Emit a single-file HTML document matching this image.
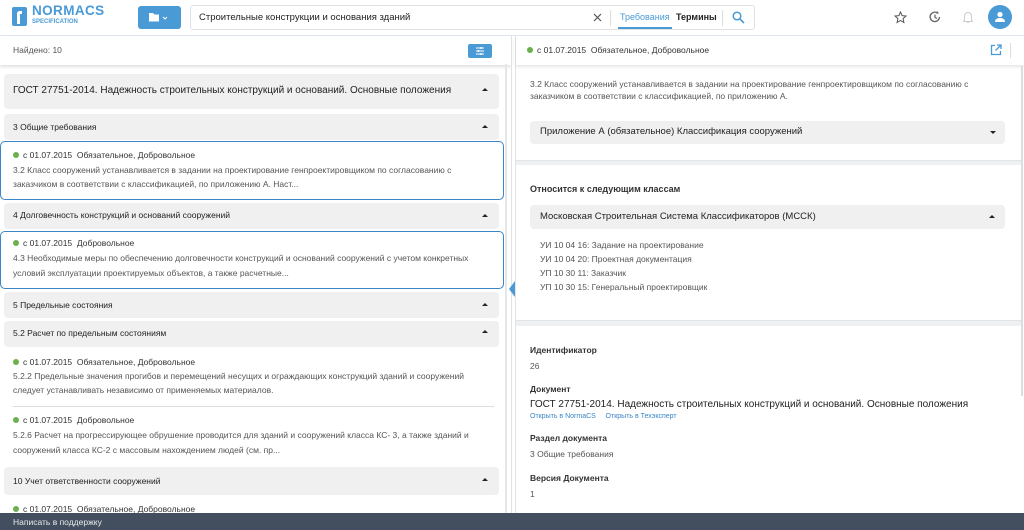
<!DOCTYPE html>
<html><head><meta charset="utf-8"><style>
*{margin:0;padding:0;box-sizing:border-box}
body{width:1024px;height:530px;overflow:hidden;background:#fff;font-family:"Liberation Sans","Noto Sans CJK SC",sans-serif;color:#333;position:relative;font-size:8.5px}
.a{position:absolute;white-space:nowrap}
.g{position:absolute;background:#f0f0f0;border-radius:4px}
.bc{position:absolute;border:1.3px solid #3a86c8;border-radius:5px;background:#fff}
.dot{display:inline-block;width:6px;height:6px;border-radius:50%;background:#6ab04c;margin-right:4px;vertical-align:0}
.t{color:#555}
.b{font-weight:bold;color:#333}
.car{position:absolute;width:0;height:0;border-left:3px solid transparent;border-right:3px solid transparent;border-bottom:3px solid #222}
.cd{border-bottom:0;border-top:3px solid #222}
</style></head><body>
<!-- header -->
<div class="a" style="left:0;top:0;width:1024px;height:36px;border-bottom:1px solid #dfe6ee"></div>
<svg class="a" style="left:12px;top:7px" width="15" height="19"><path d="M2 0h11a2 2 0 0 1 2 2v15a2 2 0 0 1-2 2H2a2 2 0 0 1-2-2V2a2 2 0 0 1 2-2z" fill="#4a9ad6"/><path d="M5 17V7c0-2 1-3 3-3h2v3H8v10z" fill="#fff"/></svg>
<div class="a" style="left:32px;top:3px;font-size:13.5px;font-weight:bold;color:#4a9ad6;letter-spacing:.4px">NORMACS</div>
<div class="a" style="left:32px;top:19px;font-size:6px;font-weight:bold;color:#4a9ad6">SPECIFICATION</div>
<div class="a" style="left:138px;top:6px;width:43px;height:23px;background:#4a9ad6;border-radius:3px"></div>
<svg class="a" style="left:149px;top:12px" width="24" height="11"><path d="M0 1h4l1.5 1.5H10v7H0z" fill="#fff"/><path d="M14 5l2 2 2-2" stroke="#fff" fill="none" stroke-width="1"/></svg>
<div class="a" style="left:190px;top:5px;width:565px;height:25px;border:1px solid #dfe3e8;border-radius:3px"></div>
<div class="a" style="left:199px;top:12px;font-size:9.5px;color:#222">Строительные конструкции и основания зданий</div>
<svg class="a" style="left:593px;top:13px" width="9" height="9"><path d="M1 1l7 7M8 1l-7 7" stroke="#555" stroke-width="1.2"/></svg>
<div class="a" style="left:610px;top:10px;width:1px;height:16px;background:#ddd"></div>
<div class="a" style="left:620px;top:12px;font-size:9px;color:#4a9ad6">Требования</div>
<div class="a" style="left:618px;top:27px;width:54px;height:2px;background:#4a9ad6"></div>
<div class="a" style="left:676px;top:12px;font-size:9px;color:#222;font-weight:bold">Термины</div>
<div class="a" style="left:722px;top:10px;width:1px;height:16px;background:#ddd"></div>
<svg class="a" style="left:732px;top:11px" width="13" height="13"><circle cx="5" cy="5" r="3.8" stroke="#4a9ad6" stroke-width="1.5" fill="none"/><path d="M8 8l4 4" stroke="#4a9ad6" stroke-width="1.6"/></svg>
<svg class="a" style="left:894px;top:11px" width="13" height="13"><path d="M6.5 1l1.6 3.6 3.9.4-2.9 2.6.8 3.9-3.4-2-3.4 2 .8-3.9L1 5l3.9-.4z" stroke="#555" fill="none" stroke-width="1"/></svg>
<svg class="a" style="left:928px;top:10px" width="14" height="14"><path d="M11.5 7A4.7 4.7 0 1 1 9.5 3" stroke="#666" fill="none" stroke-width="1.3"/><path d="M7 4.5V7.5l2 1" stroke="#666" fill="none" stroke-width="1.2"/><path d="M9 1l2 2.3-2.6.6z" fill="#666"/></svg>
<svg class="a" style="left:962px;top:11px" width="12" height="13"><path d="M6 1.5c-2.3 0-3.5 1.7-3.5 4V9L1.5 10.5h9L9.5 9V5.5C9.5 3.2 8.3 1.5 6 1.5z" stroke="#ccc" fill="none"/><path d="M5 11.5h2" stroke="#ccc"/></svg>
<div class="a" style="left:988px;top:5px;width:24px;height:24px;border-radius:50%;background:#4a9ad6"></div>
<svg class="a" style="left:994px;top:11px" width="12" height="12"><circle cx="6" cy="3.5" r="2.6" fill="#fff"/><path d="M1 11c0-3 2.5-4 5-4s5 1 5 4z" fill="#fff"/></svg>

<!-- left toolbar -->
<div class="a" style="left:0;top:36px;width:511px;height:29px;background:#fff;box-shadow:0 2px 3px rgba(0,0,0,.12)"></div>
<div class="a" style="left:13px;top:45px;color:#555">Найдено: 10</div>
<div class="a" style="left:468px;top:44px;width:24px;height:14px;background:#4a9ad6;border-radius:2px"></div>
<svg class="a" style="left:475px;top:46px" width="10" height="10"><path d="M1 2h8M1 5h8M1 8h8" stroke="#fff" stroke-width="1"/><path d="M6 1v2M3.5 4v2M6 7v2" stroke="#fff" stroke-width="1.3"/></svg>
<div class="a" style="left:505px;top:64px;width:2px;height:449px;background:#e6e6e6"></div>
<div class="a" style="left:511px;top:36px;width:1px;height:477px;background:#e3e3e3"></div>

<div class="g" style="left:4px;top:74px;width:495px;height:35px"></div>
<div class="a" style="left:13px;top:85px;font-size:10px;color:#222">ГОСТ 27751-2014. Надежность строительных конструкций и оснований. Основные положения</div>
<div class="car" style="left:482px;top:88px"></div>

<div class="g" style="left:4px;top:114px;width:495px;height:26px"></div>
<div class="a" style="left:13px;top:122px;color:#222">3 Общие требования</div>
<div class="car" style="left:482px;top:125px"></div>

<div class="bc" style="left:0;top:141px;width:504px;height:59px"></div>
<div class="a" style="left:13px;top:150px;color:#333"><span class="dot"></span>с 01.07.2015&nbsp; Обязательное, Добровольное</div>
<div class="a t" style="left:13px;top:165px">3.2 Класс сооружений устанавливается в задании на проектирование генпроектировщиком по согласованию с</div>
<div class="a t" style="left:13px;top:179px">заказчиком в соответствии с классификацией, по приложению А. Наст...</div>

<div class="g" style="left:4px;top:203px;width:495px;height:26px"></div>
<div class="a" style="left:13px;top:210px;color:#222">4 Долговечность конструкций и оснований сооружений</div>
<div class="car" style="left:482px;top:214px"></div>

<div class="bc" style="left:0;top:231px;width:504px;height:58px"></div>
<div class="a" style="left:13px;top:238px;color:#333"><span class="dot"></span>с 01.07.2015&nbsp; Добровольное</div>
<div class="a t" style="left:13px;top:253px">4.3 Необходимые меры по обеспечению долговечности конструкций и оснований сооружений с учетом конкретных</div>
<div class="a t" style="left:13px;top:268px">условий эксплуатации проектируемых объектов, а также расчетные...</div>

<div class="g" style="left:4px;top:292px;width:495px;height:26px"></div>
<div class="a" style="left:13px;top:300px;color:#222">5 Предельные состояния</div>
<div class="car" style="left:482px;top:303px"></div>

<div class="g" style="left:4px;top:321px;width:495px;height:26px"></div>
<div class="a" style="left:13px;top:328px;color:#222">5.2 Расчет по предельным состояниям</div>
<div class="car" style="left:482px;top:330px"></div>

<div class="a" style="left:13px;top:357px;color:#333"><span class="dot"></span>с 01.07.2015&nbsp; Обязательное, Добровольное</div>
<div class="a t" style="left:13px;top:371px">5.2.2 Предельные значения прогибов и перемещений несущих и ограждающих конструкций зданий и сооружений</div>
<div class="a t" style="left:13px;top:385px">следует устанавливать независимо от применяемых материалов.</div>
<div class="a" style="left:13px;top:406px;width:481px;height:1px;background:#ddd"></div>
<div class="a" style="left:13px;top:415px;color:#333"><span class="dot"></span>с 01.07.2015&nbsp; Добровольное</div>
<div class="a t" style="left:13px;top:430px">5.2.6 Расчет на прогрессирующее обрушение проводится для зданий и сооружений класса КС- 3, а также зданий и</div>
<div class="a t" style="left:13px;top:445px">сооружений класса КС-2 с массовым нахождением людей (см. пр...</div>

<div class="g" style="left:4px;top:467px;width:495px;height:28px"></div>
<div class="a" style="left:13px;top:476px;color:#222">10 Учет ответственности сооружений</div>
<div class="car" style="left:482px;top:478px"></div>
<div class="a" style="left:13px;top:504px;color:#333"><span class="dot"></span>с 01.07.2015&nbsp; Обязательное, Добровольное</div>

<svg class="a" style="left:509px;top:281px" width="6" height="16"><path d="M6 0L0 8l6 8z" fill="#4a9ad6"/></svg>

<!-- right panel -->
<div class="a" style="left:515px;top:36px;width:1px;height:477px;background:#e3e3e3"></div>
<div class="a" style="left:516px;top:36px;width:508px;height:29px;box-shadow:0 2px 3px rgba(0,0,0,.1)"></div>
<div class="a" style="left:527px;top:45px;color:#333"><span class="dot"></span>с 01.07.2015&nbsp; Обязательное, Добровольное</div>
<svg class="a" style="left:990px;top:44px" width="12" height="12"><path d="M5 1.5H1.5v9h9V7" stroke="#4a9ad6" fill="none" stroke-width="1.3"/><path d="M7 1h4v4M11 1L5.5 6.5" stroke="#4a9ad6" fill="none" stroke-width="1.3"/></svg>
<div class="a" style="left:1010px;top:43px;width:1px;height:15px;background:#ddd"></div>
<div class="a" style="left:1021px;top:66px;width:2px;height:330px;background:#ddd"></div>

<div class="a t" style="left:530px;top:79px">3.2 Класс сооружений устанавливается в задании на проектирование генпроектировщиком по согласованию с</div>
<div class="a t" style="left:530px;top:91px">заказчиком в соответствии с классификацией, по приложению А.</div>
<div class="g" style="left:530px;top:121px;width:475px;height:23px"></div>
<div class="a" style="left:540px;top:126px;font-size:9.5px;color:#222">Приложение А (обязательное) Классификация сооружений</div>
<div class="car cd" style="left:990px;top:131px"></div>

<div class="a" style="left:516px;top:160px;width:505px;height:5px;background:#eef0f2;border-top:1px solid #e2e5e8"></div>
<div class="a b" style="left:530px;top:184px;font-size:9px">Относится к следующим классам</div>
<div class="g" style="left:530px;top:205px;width:475px;height:24px"></div>
<div class="a" style="left:540px;top:211px;font-size:9.5px;color:#222">Московская Строительная Система Классификаторов (МССК)</div>
<div class="car" style="left:989px;top:215px"></div>
<div class="a t" style="left:540px;top:240px">УИ 10 04 16: Задание на проектирование</div>
<div class="a t" style="left:540px;top:254px">УИ 10 04 20: Проектная документация</div>
<div class="a t" style="left:540px;top:268px">УП 10 30 11: Заказчик</div>
<div class="a t" style="left:540px;top:282px">УП 10 30 15: Генеральный проектировщик</div>

<div class="a" style="left:516px;top:320px;width:505px;height:6px;background:#eef0f2;border-top:1px solid #e2e5e8"></div>
<div class="a b" style="left:530px;top:345px">Идентификатор</div>
<div class="a t" style="left:530px;top:361px">26</div>
<div class="a b" style="left:530px;top:384px">Документ</div>
<div class="a" style="left:530px;top:399px;font-size:10px;color:#222">ГОСТ 27751-2014. Надежность строительных конструкций и оснований. Основные положения</div>
<div class="a" style="left:530px;top:413px;font-size:7px;color:#3a86c8">Открыть в NormaCS &nbsp;&nbsp;&nbsp; Открыть в Техэксперт</div>
<div class="a b" style="left:530px;top:433px">Раздел документа</div>
<div class="a t" style="left:530px;top:449px">3 Общие требования</div>
<div class="a b" style="left:530px;top:473px">Версия Документа</div>
<div class="a t" style="left:530px;top:489px">1</div>

<!-- bottom bar -->
<div class="a" style="left:0;top:513px;width:1024px;height:17px;background:#434f5e"></div>
<div class="a" style="left:13px;top:517px;color:#e8eaed">Написать в поддержку</div>
</body></html>
